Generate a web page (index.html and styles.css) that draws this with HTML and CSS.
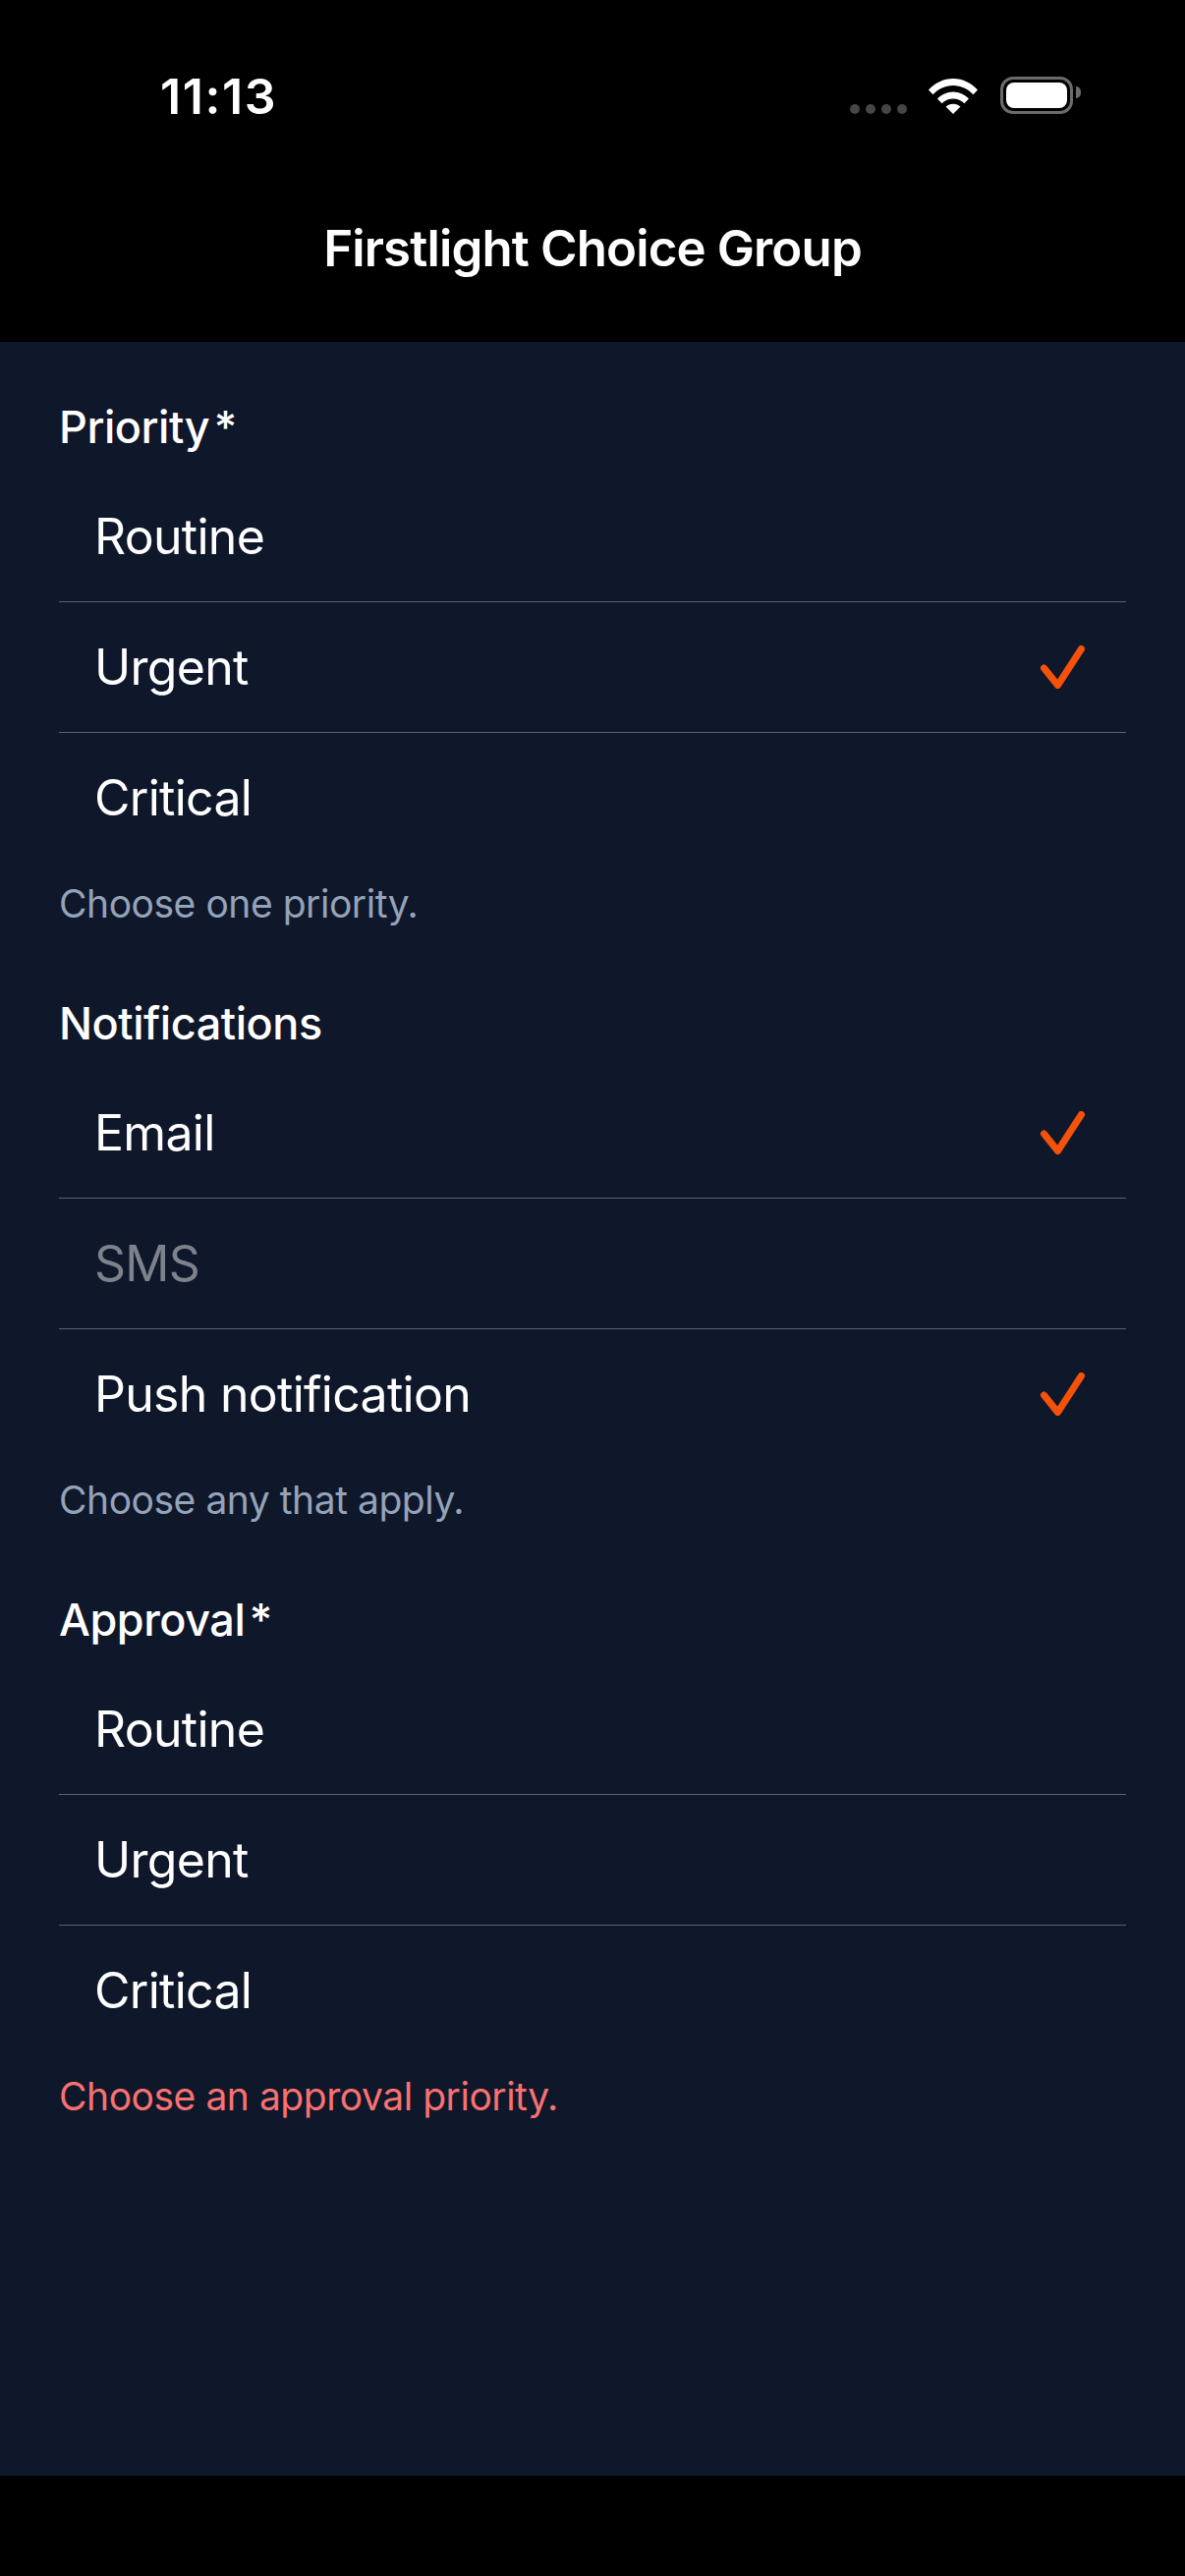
FILE: index.html
```html
<!DOCTYPE html>
<html lang="en">
<head>
    <meta charset="UTF-8">
    <meta name="viewport" content="width=device-width, initial-scale=1.0">
    <title>Firstlight Choice Group</title>
    <link rel="stylesheet" href="styles.css">
</head>
<body>
    <header class="top">
        <div class="status">
            <span class="time">11:13</span>
            <div class="status-icons">
                <div class="dots"><i></i><i></i><i></i><i></i></div>
                <svg class="wifi" width="52" height="38" viewBox="0 0 52 38">
                    <path d="M1 13.5C7.5 6.5 16 2 26 2s18.500 4.500 25 11.500l-4.500 4.700C41 12.500 34 9 26 9S11 12.500 5.500 18.200z" fill="#fff"/>
                    <path d="M10 22.500C14 18.500 19.500 15.500 26 15.500s12 3 16 7l-4.600 4.800C34.500 24.500 30.500 22.500 26 22.500s-8.500 2-11.400 4.800z" fill="#fff"/>
                    <path d="M18.500 30.500C20.500 28.800 23 27.700 26 27.700s5.500 1.100 7.500 2.800L26 38z" fill="#fff"/>
                </svg>
                <div class="battery"><div class="battery-fill"></div></div>
            </div>
        </div>
        <h1 class="title">Firstlight Choice Group</h1>
    </header>

    <main class="content">
        <section class="group">
            <h2 class="group-label">Priority *</h2>
            <ul class="options">
                <li class="option">Routine</li>
                <li class="option">Urgent
                    <svg class="check" width="48" height="44" viewBox="0 0 48 44"><path d="M4.500 23 L18.500 40.500 L42.500 3.500"/></svg>
                </li>
                <li class="option">Critical</li>
            </ul>
            <p class="hint">Choose one priority.</p>
        </section>

        <section class="group">
            <h2 class="group-label">Notifications</h2>
            <ul class="options">
                <li class="option">Email
                    <svg class="check" width="48" height="44" viewBox="0 0 48 44"><path d="M4.500 23 L18.500 40.500 L42.500 3.500"/></svg>
                </li>
                <li class="option disabled">SMS</li>
                <li class="option">Push notification
                    <svg class="check" width="48" height="44" viewBox="0 0 48 44"><path d="M4.500 23 L18.500 40.500 L42.500 3.500"/></svg>
                </li>
            </ul>
            <p class="hint">Choose any that apply.</p>
        </section>

        <section class="group">
            <h2 class="group-label">Approval *</h2>
            <ul class="options">
                <li class="option">Routine</li>
                <li class="option">Urgent</li>
                <li class="option">Critical</li>
            </ul>
            <p class="hint error">Choose an approval priority.</p>
        </section>
    </main>

    <div class="bottom"></div>
</body>
</html>
```

FILE: styles.css
```css
* {
  box-sizing: border-box;
}

body {
  font-family: Inter, "Liberation Sans", sans-serif;
  margin: 0;
  padding: 0;
  height: 2622px;
  background-color: #000;
  color: #fff;
  display: flex;
  flex-direction: column;
}

.top {
  height: 348px;
  background-color: #000;
}

.status {
  height: 223px;
  padding: 0 114px 0 163px;
  display: flex;
  justify-content: space-between;
  align-items: flex-start;
}

.time {
  margin-top: 68px;
  font-size: 50px;
  line-height: 60px;
  font-weight: 600;
  letter-spacing: 1.6px;
}

.status-icons {
  margin-top: 78px;
  display: flex;
  align-items: flex-start;
}

.dots {
  margin-top: 28px;
  display: flex;
  gap: 6px;
}

.dots i {
  display: block;
  width: 10px;
  height: 10px;
  border-radius: 50%;
  background-color: #464646;
}

.wifi {
  margin-left: 21px;
}

.battery {
  position: relative;
  margin-left: 22px;
  width: 74px;
  height: 38px;
  padding: 3px;
  border: 3px solid #6b6b6b;
  border-radius: 13px;
}

.battery::after {
  content: "";
  position: absolute;
  left: 74px;
  top: 7px;
  width: 5px;
  height: 12px;
  background-color: #6b6b6b;
  border-radius: 0 6px 6px 0;
}

.battery-fill {
  height: 100%;
  background-color: #fff;
  border-radius: 8px;
}

.title {
  margin: 0;
  text-align: center;
  font-size: 51px;
  line-height: 60px;
  font-weight: 600;
  letter-spacing: -0.87px;
}

.content {
  flex: 1;
  padding: 47px 60px 0;
  background-color: #0f172a;
}

.group {
  margin-bottom: 40px;
}

.group-label {
  margin: 0;
  height: 85px;
  font-size: 45px;
  line-height: 80px;
  font-weight: 500;
  letter-spacing: -0.45px;
  word-spacing: -7px;
}

.options {
  list-style: none;
  margin: 0;
  padding: 0;
}

.option {
  height: 133px;
  padding: 0 40px 0 36px;
  display: flex;
  justify-content: space-between;
  align-items: center;
  font-size: 50px;
  font-weight: 400;
  letter-spacing: -0.72px;
  border-bottom: 1px solid #596170;
}

.option:last-child {
  height: 132px;
  border-bottom: none;
}

.option.disabled {
  color: #7d828d;
}

.check {
  fill: none;
  stroke: #f4510b;
  stroke-width: 7;
  stroke-linecap: round;
  stroke-linejoin: round;
}

.hint {
  margin: 0;
  height: 84px;
  font-size: 39px;
  font-weight: 400;
  line-height: 84px;
  letter-spacing: -0.46px;
  color: #94a3b8;
}

.hint.error {
  color: #f87171;
}

.bottom {
  height: 102px;
  background-color: #000;
}
```
